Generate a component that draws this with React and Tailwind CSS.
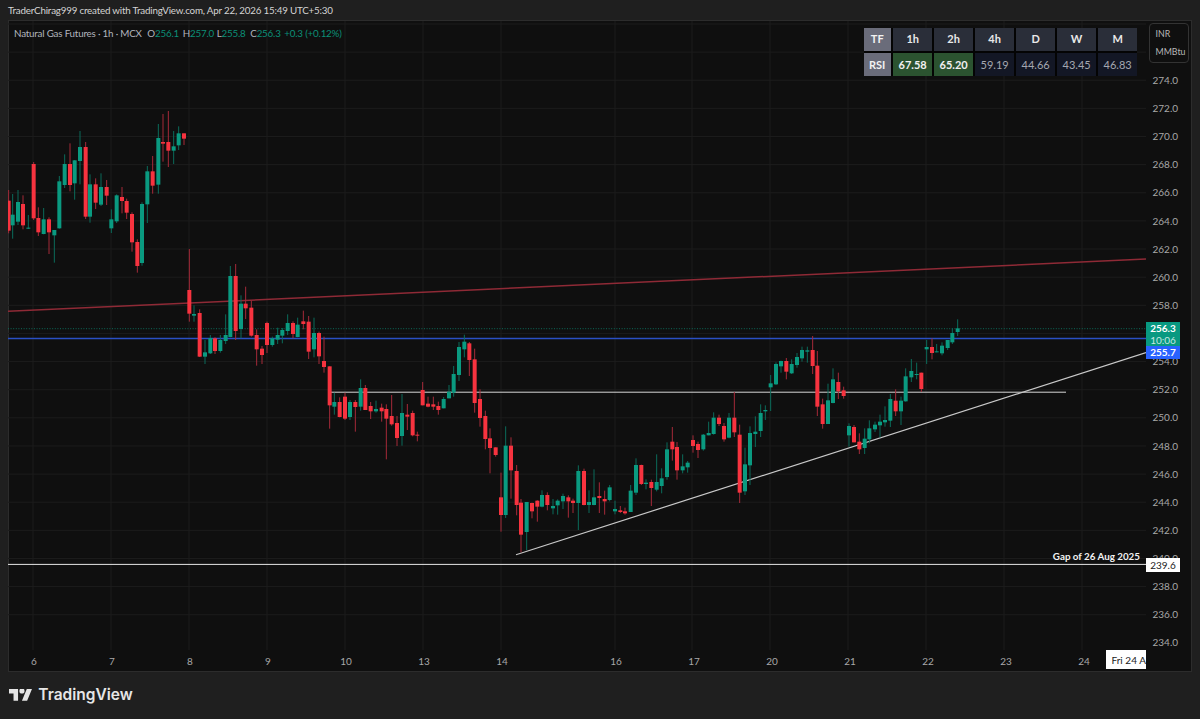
import React from "react";

// candles read off the chart: [x, wickTop, bodyTop, bodyBottom, wickBottom, color], in 3x crop units
const place = (ox, oy, rows) =>
  rows.map(([x, a, b, c, d, col]) => ({
    x: ox + x / 3,
    wickTop: oy + a / 3,
    bodyTop: oy + b / 3,
    bodyBottom: oy + c / 3,
    wickBottom: oy + d / 3,
    col,
  }));

const candles = [
  ...place(0, 100, [
    [26, 270, 302, 392, 400, "r"],
    [38, 282, 344, 376, 416, "g"],
    [54, 270, 306, 365, 375, "g"],
    [69, 286, 312, 376, 388, "r"],
    [85, 345, 383, 386, 387, "g"],
    [101, 186, 192, 355, 360, "r"],
    [115, 322, 354, 397, 408, "r"],
    [131, 324, 358, 402, 403, "g"],
    [147, 352, 358, 397, 462, "r"],
    [163, 390, 390, 406, 488, "g"],
    [178, 228, 244, 385, 386, "g"],
    [194, 163, 192, 255, 264, "g"],
    [210, 130, 192, 255, 274, "r"],
    [224, 180, 181, 250, 299, "g"],
    [240, 93, 141, 183, 253, "g"],
    [257, 126, 141, 350, 357, "r"],
    [270, 223, 253, 350, 368, "g"],
    [287, 235, 253, 308, 327, "r"],
    [303, 220, 261, 314, 318, "g"],
    [320, 240, 261, 287, 315, "r"],
    [334, 328, 358, 385, 399, "g"],
    [350, 283, 286, 364, 369, "g"],
    [366, 261, 291, 303, 340, "r"],
    [380, 296, 303, 338, 357, "r"],
    [396, 337, 342, 427, 455, "r"],
    [412, 418, 426, 498, 518, "r"],
    [426, 307, 312, 489, 497, "g"],
    [442, 198, 214, 313, 369, "g"],
    [458, 168, 214, 257, 281, "r"],
    [475, 72, 114, 254, 281, "g"],
    [489, 42, 126, 131, 185, "r"],
    [505, 33, 126, 152, 201, "r"],
    [521, 93, 139, 152, 192, "g"],
    [536, 79, 100, 136, 150, "g"],
    [552, 100, 100, 116, 135, "r"],
  ]),
  ...place(0, 230, [
    [568, 57, 180, 251, 275, "r"],
    [582, 226, 252, 257, 275, "g"],
    [599, 238, 249, 380, 381, "r"],
    [615, 330, 367, 380, 402, "g"],
    [631, 315, 324, 370, 372, "g"],
    [645, 322, 325, 363, 372, "r"],
    [661, 315, 330, 363, 368, "g"],
    [677, 253, 315, 333, 342, "g"],
    [691, 108, 138, 321, 322, "g"],
    [707, 102, 138, 303, 330, "r"],
    [723, 196, 221, 297, 325, "g"],
    [737, 170, 221, 235, 267, "r"],
    [754, 212, 233, 317, 320, "r"],
    [770, 298, 315, 358, 407, "r"],
    [786, 348, 356, 375, 402, "r"],
    [801, 275, 279, 345, 369, "r"],
    [817, 320, 325, 345, 350, "g"],
    [833, 293, 315, 329, 342, "g"],
    [847, 294, 300, 317, 340, "g"],
    [863, 253, 279, 303, 315, "g"],
    [879, 274, 279, 312, 325, "r"],
    [893, 263, 284, 321, 322, "g"],
    [910, 242, 274, 282, 298, "r"],
    [926, 258, 275, 365, 387, "r"],
    [942, 263, 309, 358, 382, "g"],
    [957, 305, 309, 379, 402, "r"],
    [972, 320, 393, 411, 428, "r"],
    [989, 409, 409, 526, 596, "r"],
    [1003, 488, 516, 530, 554, "g"],
    [1019, 502, 516, 561, 562, "r"],
    [1035, 488, 500, 566, 570, "r"],
    [1050, 510, 516, 561, 570, "g"],
    [1066, 510, 516, 531, 605, "r"],
    [1082, 448, 474, 530, 542, "g"],
    [1096, 465, 474, 540, 540, "r"],
    [1112, 516, 528, 544, 567, "r"],
    [1128, 512, 537, 544, 548, "g"],
    [1145, 521, 533, 544, 575, "r"],
    [1159, 523, 537, 566, 688, "r"],
    [1175, 495, 558, 583, 587, "r"],
    [1191, 558, 579, 624, 648, "r"],
  ]),
  ...place(400, 330, [
    [6, 192, 249, 318, 347, "g"],
    [22, 222, 254, 260, 300, "r"],
    [38, 242, 249, 316, 319, "r"],
    [52, 305, 314, 317, 334, "r"],
    [68, 156, 180, 226, 226, "r"],
    [84, 200, 221, 230, 232, "r"],
    [100, 200, 223, 230, 240, "r"],
    [115, 215, 228, 240, 254, "r"],
    [131, 201, 207, 235, 235, "g"],
    [147, 165, 185, 205, 205, "g"],
    [161, 108, 132, 188, 200, "g"],
    [177, 36, 51, 135, 153, "g"],
    [193, 14, 35, 58, 82, "g"],
    [208, 36, 40, 90, 138, "r"],
    [224, 56, 88, 219, 248, "r"],
    [240, 178, 207, 264, 290, "r"],
    [256, 242, 258, 327, 358, "r"],
    [270, 295, 325, 354, 430, "r"],
    [287, 352, 352, 375, 380, "r"],
    [303, 428, 502, 555, 605, "r"],
    [317, 289, 347, 555, 564, "g"],
    [333, 322, 347, 421, 506, "r"],
    [350, 405, 423, 525, 556, "r"],
    [363, 507, 518, 614, 667, "r"],
    [380, 516, 516, 606, 660, "g"],
    [396, 518, 519, 544, 565, "r"],
    [412, 511, 512, 530, 575, "r"],
    [426, 481, 495, 530, 532, "g"],
    [442, 487, 495, 525, 541, "r"],
    [459, 507, 528, 535, 553, "g"],
    [473, 508, 512, 526, 554, "g"],
    [489, 491, 498, 514, 537, "g"],
    [505, 496, 502, 514, 563, "r"],
    [519, 506, 512, 519, 549, "r"],
    [535, 406, 423, 519, 600, "g"],
    [552, 416, 423, 525, 526, "r"],
    [567, 481, 516, 525, 549, "g"],
    [582, 418, 502, 525, 526, "g"],
    [598, 457, 498, 504, 549, "r"],
    [614, 482, 507, 514, 554, "r"],
    [629, 465, 472, 510, 514, "g"],
    [645, 512, 537, 544, 553, "g"],
    [661, 528, 541, 546, 549, "r"],
    [675, 533, 544, 550, 554, "r"],
    [692, 465, 482, 546, 546, "g"],
    [708, 385, 405, 488, 495, "g"],
    [724, 404, 405, 462, 465, "r"],
    [738, 448, 458, 462, 478, "g"],
    [754, 449, 456, 474, 528, "r"],
    [770, 373, 456, 479, 484, "g"],
    [785, 415, 445, 468, 490, "g"],
    [801, 337, 358, 441, 449, "g"],
    [817, 291, 335, 358, 392, "r"],
    [831, 336, 351, 421, 449, "r"],
    [848, 373, 409, 421, 430, "g"],
    [863, 393, 398, 412, 428, "g"],
    [879, 316, 330, 348, 368, "r"],
    [894, 335, 342, 360, 384, "r"],
    [910, 312, 314, 358, 362, "g"],
    [926, 275, 309, 316, 316, "g"],
    [941, 247, 263, 312, 314, "g"],
    [957, 254, 263, 282, 288, "r"],
    [972, 279, 288, 328, 335, "r"],
    [987, 249, 263, 323, 325, "g"],
    [1003, 186, 263, 307, 321, "r"],
    [1019, 284, 314, 488, 519, "r"],
    [1035, 353, 403, 484, 495, "g"],
    [1050, 289, 309, 406, 465, "g"],
    [1066, 259, 305, 312, 351, "g"],
    [1082, 223, 249, 303, 321, "g"],
    [1096, 226, 240, 244, 270, "g"],
    [1112, 135, 160, 172, 243, "g"],
    [1128, 97, 102, 163, 165, "g"],
    [1143, 92, 93, 109, 128, "g"],
    [1159, 84, 93, 125, 148, "r"],
    [1175, 88, 102, 130, 132, "g"],
    [1191, 69, 81, 105, 113, "g"],
  ]),
  ...place(730, 310, [
    [216, 110, 120, 145, 155, "g"],
    [232, 110, 121, 125, 158, "g"],
    [248, 78, 120, 168, 192, "r"],
    [262, 123, 167, 290, 318, "r"],
    [278, 266, 283, 342, 356, "r"],
    [294, 221, 271, 342, 342, "g"],
    [309, 175, 208, 279, 280, "g"],
    [325, 188, 216, 244, 267, "r"],
    [341, 230, 241, 258, 266, "r"],
    [357, 340, 348, 376, 410, "g"],
    [372, 345, 351, 397, 397, "r"],
    [388, 370, 395, 418, 432, "r"],
    [404, 355, 386, 414, 432, "g"],
    [418, 331, 355, 388, 400, "g"],
    [435, 335, 344, 358, 366, "g"],
    [450, 314, 335, 346, 382, "g"],
    [465, 289, 330, 337, 350, "g"],
    [481, 252, 267, 332, 351, "g"],
    [497, 238, 272, 304, 318, "r"],
    [513, 260, 272, 304, 345, "g"],
    [527, 175, 199, 274, 275, "g"],
    [544, 147, 183, 202, 216, "g"],
    [560, 158, 192, 195, 208, "g"],
    [574, 188, 188, 237, 246, "r"],
    [590, 90, 111, 118, 162, "g"],
    [606, 85, 111, 129, 148, "r"],
    [620, 102, 124, 126, 127, "g"],
    [636, 97, 107, 130, 136, "g"],
    [653, 90, 90, 114, 120, "g"],
    [667, 55, 69, 97, 102, "g"],
    [683, 28, 55, 66, 78, "g"],
  ]),
];

const gridX = [33, 111, 189, 267, 345, 423, 501, 615, 692, 770, 848, 926, 1004, 1082];
const gridY = Array.from({ length: 22 }, (_, i) => 24 + i * 28.13);
const prices = Array.from({ length: 21 }, (_, i) => (274 - i * 2).toFixed(1));
const days = ["6", "7", "8", "9", "10", "13", "14", "16", "17", "20", "21", "22", "23", "24"];
const tfs = ["1h", "2h", "4h", "D", "W", "M"];
const rsi = [
  { v: "67.58", hot: true },
  { v: "65.20", hot: true },
  { v: "59.19" },
  { v: "44.66" },
  { v: "43.45" },
  { v: "46.83" },
];

function Chart() {
  return (
    <svg viewBox="8 21 1138 629" width="1138" height="629" className="block">
      {gridX.map((x) => (
        <line key={x} x1={x} x2={x} y1="21" y2="650" stroke="#1c1c1c" />
      ))}
      {gridY.map((y) => (
        <line key={y} x1="8" x2="1146" y1={y} y2={y} stroke="#1c1c1c" />
      ))}

      <line x1="8" y1="311.3" x2="1146" y2="259" stroke="#8f2a36" strokeWidth="1.5" />
      <line x1="8" y1="328.7" x2="1146" y2="328.7" stroke="#0d6a59" strokeDasharray="1 1.6" />
      <line x1="8" y1="338.4" x2="1146" y2="338.4" stroke="#2a4fc4" strokeWidth="1.5" />
      <line x1="331" y1="392.2" x2="1066" y2="392.2" stroke="#d8d8d8" />
      <line x1="516" y1="554.7" x2="1146" y2="352.6" stroke="#c9c9c9" strokeWidth="1.2" />
      <line x1="8" y1="564.4" x2="1146" y2="564.4" stroke="#e6e6e6" />

      {candles.map((c, i) => (
        <g key={i}>
          <line
            x1={c.x}
            x2={c.x}
            y1={c.wickTop}
            y2={c.wickBottom}
            stroke={c.col === "r" ? "#a52a39" : "#0b6b5b"}
          />
          <rect
            x={c.x - 2}
            y={c.bodyTop}
            width="4"
            height={Math.max(c.bodyBottom - c.bodyTop, 1)}
            fill={c.col === "r" ? "#f7333f" : "#0a9a80"}
          />
        </g>
      ))}
    </svg>
  );
}

function RsiTable() {
  const side = "flex items-center justify-center bg-[#6a6c7a] text-[#f2f2f2] font-bold";
  return (
    <div className="absolute left-[855.5px] top-[6.8px] grid grid-cols-[27.4px_repeat(6,38.4px)] auto-rows-[23px] gap-[2.6px] bg-[#040404] text-[11px]">
      <div className={side}>TF</div>
      {tfs.map((t) => (
        <div key={t} className="flex items-center justify-center bg-[#2a2e39] text-[#e8e8e8] font-bold">
          {t}
        </div>
      ))}
      <div className={side}>RSI</div>
      {rsi.map((r) => (
        <div
          key={r.v}
          className={
            r.hot
              ? "flex items-center justify-center bg-[#2b5330] text-[#f0f0f0] font-bold"
              : "flex items-center justify-center bg-[#131725] text-[#a4a7b0]"
          }
        >
          {r.v}
        </div>
      ))}
    </div>
  );
}

function Legend() {
  const num = "text-[#0b8f78]";
  return (
    <div className="absolute left-[6px] top-[6px] flex h-[12px] items-center whitespace-nowrap text-[9.8px] tracking-[-0.2px] text-[#b2b5be]">
      <span className="w-[133.3px]">Natural Gas Futures · 1h · MCX</span>
      <span className="w-[35.4px]">O<span className={num}>256.1</span></span>
      <span className="w-[34px]">H<span className={num}>257.0</span></span>
      <span className="w-[33.6px]">L<span className={num}>255.8</span></span>
      <span className="w-[34px]">C<span className={num}>256.3</span></span>
      <span className={num}>+0.3 (+0.12%)</span>
    </div>
  );
}

export default function App() {
  return (
    <div
      className="flex h-[719px] w-[1200px] flex-col overflow-hidden bg-[#1f1f1f]"
      style={{ fontFamily: 'Lato, sans-serif' }}
    >
      <div className="flex h-[20px] items-center whitespace-nowrap pl-[8px] text-[9.8px] tracking-[-0.2px] text-[#d4d4d4]">
        TraderChirag999 created with TradingView.com, Apr 22, 2026 15:49 UTC+5:30
      </div>

      <div className="mx-[8px] flex h-[652px] flex-col border border-[#2c2c2c] bg-[#0f0f0f]">
        <div className="flex h-[629px]">
          <div className="relative w-[1138px] -ml-px">
            <Chart />
            <Legend />
            <RsiTable />
            <div className="absolute right-[6px] top-[528px] text-[9.8px] font-bold leading-[14px] text-[#f2f2f2]">
              Gap of 26 Aug 2025
            </div>
          </div>

          <div className="relative flex-1 text-[10px] text-[#a8a8a8]">
            <div className="flex flex-col pl-[6.5px] pt-[45.4px]">
              {prices.map((p) => (
                <div key={p} className="flex h-[28.13px] items-center">
                  {p}
                </div>
              ))}
            </div>

            <div className="absolute left-[2.5px] top-[2.3px] flex h-[39.4px] w-[40.5px] flex-col justify-between rounded-[4px] border border-[#333333] bg-[#0f0f0f] px-[6px] py-[3px] text-[8.8px] leading-[14px] text-[#b8b8b8]">
              <span>INR</span>
              <span>MMBtu</span>
            </div>

            <div className="absolute left-0 top-[301.3px] flex h-[24px] w-[34px] flex-col items-center justify-center bg-[#089981] text-[10px] leading-[12px]">
              <span className="font-bold text-white">256.3</span>
              <span className="text-[#c5e8e1]">10:06</span>
            </div>
            <div className="absolute left-0 top-[325.3px] flex h-[13px] w-[34px] items-center justify-center bg-[#2962ff] font-bold text-white">
              255.7
            </div>
            <div className="absolute left-0 top-[537px] flex h-[14px] w-[34px] items-center justify-center bg-white text-[#222222]">
              239.6
            </div>
          </div>
        </div>

        <div className="relative flex flex-1 gap-[28px] text-[10px] text-[#a8a8a8]">
          {days.map((d) => (
            <div key={d} className={d === "16" ? "ml-[36px] w-[50px] text-center leading-[22px]" : "w-[50px] text-center leading-[22px]"}>
              {d}
            </div>
          ))}
          <div className="absolute left-[1096.5px] top-0 h-[19px] w-[40.5px] overflow-hidden whitespace-nowrap bg-white pl-[6px] leading-[20px] text-[#222222]">
            Fri 24 Apr '26
          </div>
        </div>
      </div>

      <div className="flex flex-1 items-center gap-[6px] pl-[9px] pb-[1px]">
        <svg viewBox="0 4 36 18" width="23.3" height="11.7" fill="#e6e6e6">
          <path d="M14 22H7V11H0V4h14v18zM28 22h-8l7.5-18h8L28 22z" />
          <circle cx="20" cy="7" r="4" />
        </svg>
        <span className="text-[15.5px] font-semibold leading-none text-[#e6e6e6]" style={{ fontFamily: "Inter, sans-serif" }}>
          TradingView
        </span>
      </div>
    </div>
  );
}
